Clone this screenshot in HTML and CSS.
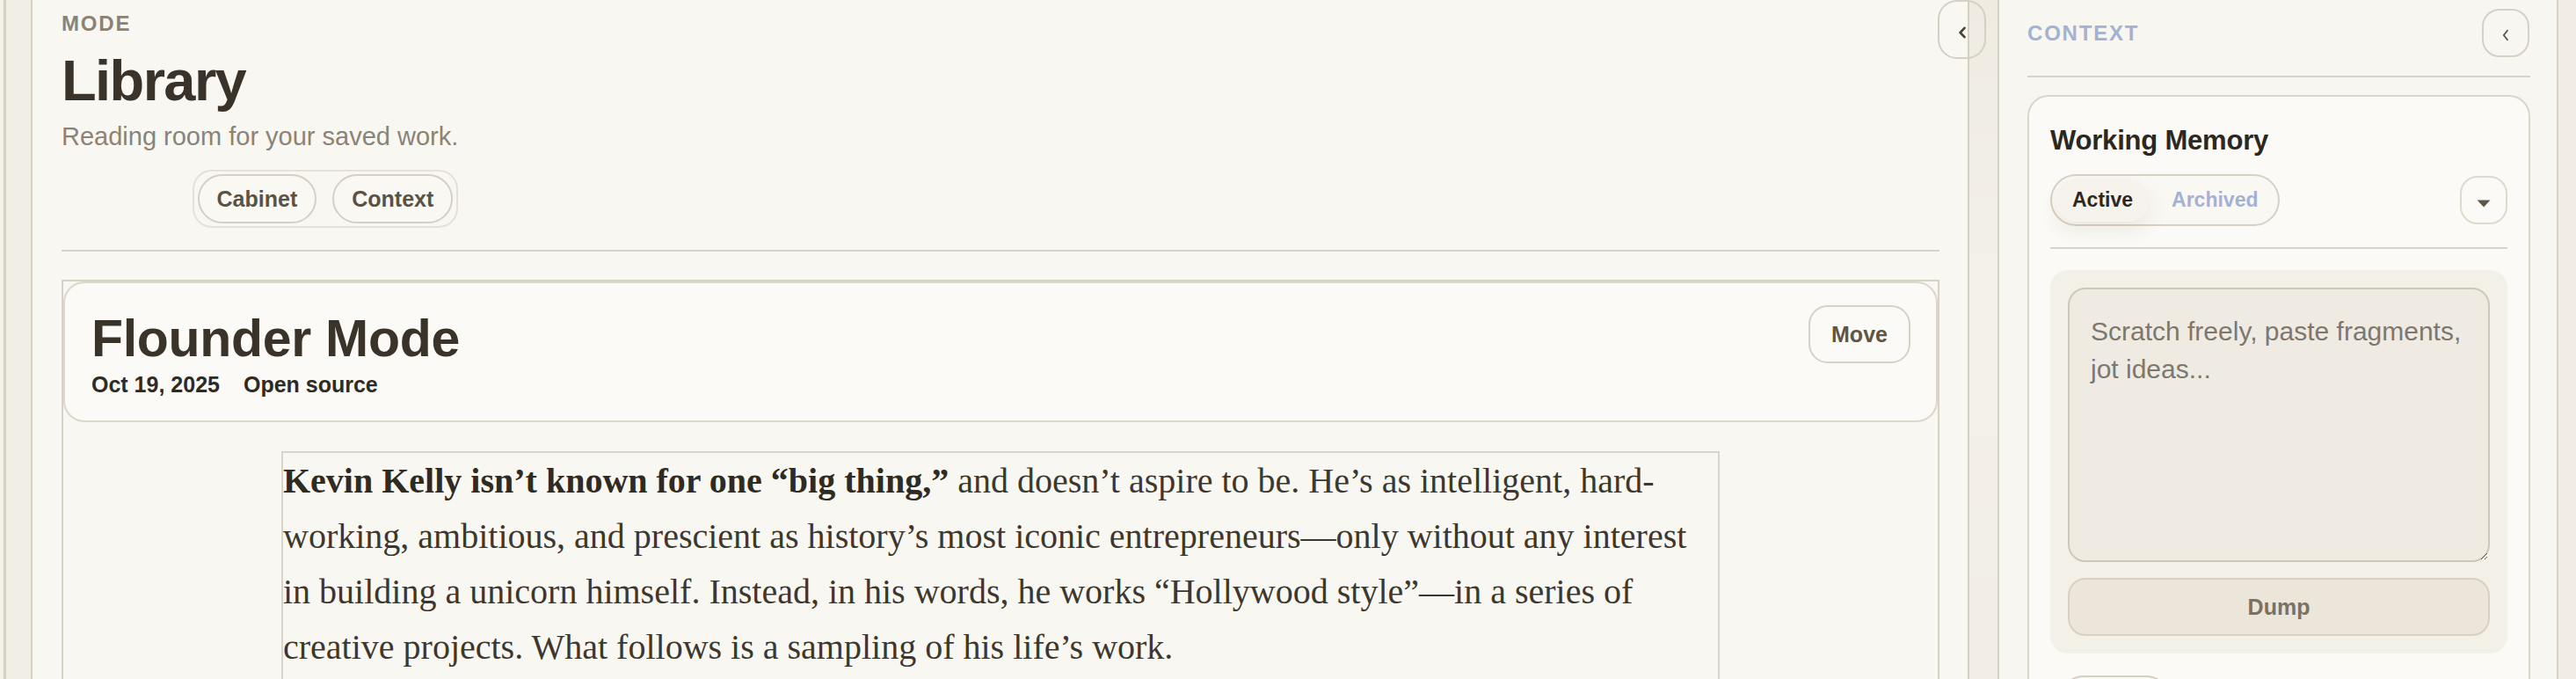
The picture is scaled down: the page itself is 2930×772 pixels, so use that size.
FILE: index.html
```html
<!DOCTYPE html>
<html lang="en">
<head>
<meta charset="utf-8">
<title>Library</title>
<link rel="stylesheet" href="styles.css">
</head>
<body>
<div class="app">
  <div class="rail-left"></div>

  <main class="main">
    <header class="mode-head">
      <div class="eyebrow">MODE</div>
      <h1 class="mode-title">Library</h1>
      <p class="mode-sub">Reading room for your saved work.</p>
      <div class="seg">
        <button class="seg-btn">Cabinet</button>
        <button class="seg-btn">Context</button>
      </div>
    </header>
    <div class="rule"></div>

    <article class="doc">
      <div class="doc-head">
        <div class="doc-head-text">
          <h2 class="doc-title">Flounder Mode</h2>
          <div class="doc-meta"><span>Oct 19, 2025</span><span>Open source</span></div>
        </div>
        <button class="btn-move">Move</button>
      </div>
      <div class="doc-body">
        <p><strong>Kevin Kelly isn’t known for one “big thing,”</strong> and doesn’t aspire to be. He’s as intelligent, hard-working, ambitious, and prescient as history’s most iconic entrepreneurs—only without any interest in building a unicorn himself. Instead, in his words, he works “Hollywood style”—in a series of creative projects. What follows is a sampling of his life’s work.</p>
      </div>
    </article>

    <button class="collapse collapse-main" aria-label="Collapse">
      <svg width="10" height="14" viewBox="0 0 10 14"><path d="M7.5 1.8 L2.6 7 L7.5 12.2" fill="none" stroke="#4a4235" stroke-width="2.6" stroke-linecap="round" stroke-linejoin="round"/></svg>
    </button>
  </main>

  <div class="gutter"></div>

  <aside class="side">
    <div class="side-head">
      <div class="eyebrow eyebrow-blue">CONTEXT</div>
      <button class="collapse collapse-side" aria-label="Collapse context">
        <svg width="8" height="14" viewBox="0 0 8 14"><path d="M6 1.8 L1.8 7 L6 12.2" fill="none" stroke="#5a5245" stroke-width="1.8" stroke-linecap="round" stroke-linejoin="round"/></svg>
      </button>
    </div>
    <div class="side-rule"></div>

    <section class="card">
      <h3 class="card-title">Working Memory</h3>
      <div class="card-row">
        <div class="wm-toggle">
          <button class="wm-tab is-active">Active</button>
          <button class="wm-tab">Archived</button>
        </div>
        <button class="dropdown" aria-label="Options">
          <svg width="16" height="9" viewBox="0 0 16 9"><path d="M0.5 0.5 H15.5 L8 8.5 Z" fill="#5f5647"/></svg>
        </button>
      </div>
      <div class="card-rule"></div>
      <div class="scratch">
        <textarea class="scratch-input" placeholder="Scratch freely, paste fragments, jot ideas..."></textarea>
        <button class="dump">Dump</button>
      </div>
      <div class="card-foot">
        <button class="foot-pill" aria-label="More"></button>
      </div>
    </section>
  </aside>

  <div class="rail-right"></div>
</div>
</body>
</html>
```

FILE: styles.css
```css
* { box-sizing: border-box; }

html, body {
  margin: 0;
  padding: 0;
  width: 2930px;
  height: 772px;
  overflow: hidden;
  background: #f4f1ea;
  font-family: "Liberation Sans", Arial, sans-serif;
  color: #3a3329;
}

button {
  font-family: "Liberation Sans", Arial, sans-serif;
  cursor: pointer;
  margin: 0;
}

.app {
  display: flex;
  height: 772px;
  padding-left: 4px;
  overflow: hidden;
}

/* rails */
.rail-left {
  flex: 0 0 33px;
  border-left: 3px solid #d7d1c5;
  border-right: 2px solid #d7d1c5;
  background: #f1eee6;
}

.rail-right {
  flex: 0 0 22px;
  border-left: 2px solid #d7d1c5;
  background: #f1ede5;
}

.gutter {
  flex: 0 0 36px;
  border-left: 2px solid #d6d0c4;
  border-right: 2px solid #d6d0c4;
  background: linear-gradient(180deg, #efebe2 0%, #f4f1e9 45%, #f2eee6 100%);
}

/* main */
.main {
  position: relative;
  flex: 1 1 auto;
  min-width: 0;
  height: 772px;
  padding: 13px 32px 0 33px;
  background: #f9f7f1;
}

.eyebrow {
  font-size: 24px;
  line-height: 28px;
  font-weight: 700;
  letter-spacing: 1.8px;
  color: #8b8273;
}

.eyebrow-blue {
  color: #a3b1d2;
}

.mode-head {
  display: flex;
  flex-direction: column;
  align-items: flex-start;
  width: fit-content;
}

.mode-title {
  margin: 18px 0 0;
  font-size: 65px;
  line-height: 65px;
  font-weight: 700;
  letter-spacing: -1.6px;
  color: #3a3329;
}

.mode-sub {
  margin: 13px 0 0;
  font-size: 29px;
  line-height: 36px;
  color: #8a8377;
}

.seg {
  align-self: flex-end;
  margin-top: 20px;
  display: flex;
  gap: 18px;
  padding: 3px 4px;
  border: 2px solid #e6e0d6;
  border-radius: 22px;
}

.seg-btn {
  height: 56px;
  padding: 0 20px;
  border: 2px solid #d6cfc3;
  border-radius: 999px;
  background: #faf8f3;
  font-size: 25px;
  font-weight: 700;
  color: #5b5243;
}

.rule {
  height: 2px;
  margin: 25px 0 32px;
  background: #d9d3c7;
}

/* article */
.doc {
  border: 2px solid #d8d2c5;
  border-bottom: none;
  height: 454px;
  overflow: hidden;
}

.doc-head {
  display: flex;
  justify-content: space-between;
  align-items: flex-start;
  padding: 25px 29px 27px 30px;
  border: 2px solid #ddd6ca;
  border-radius: 24px;
  background: #fbfaf6;
}

.doc-title {
  margin: 0;
  font-size: 59px;
  line-height: 76px;
  font-weight: 700;
  letter-spacing: -0.3px;
  color: #3a3329;
}

.doc-meta {
  display: flex;
  gap: 27px;
  font-size: 25px;
  line-height: 28px;
  font-weight: 700;
  color: #2f2a22;
}

.btn-move {
  width: 116px;
  height: 66px;
  border: 2px solid #d8d0c4;
  border-radius: 22px;
  background: #fbfaf6;
  font-size: 25px;
  font-weight: 700;
  color: #5e5545;
}

.doc-body {
  width: 1636px;
  height: 259px;
  margin: 33px auto 0;
  border: 2px solid #d9d4c9;
  border-bottom: none;
}

.doc-body p {
  margin: 0;
  font-family: "Liberation Serif", "Times New Roman", serif;
  font-size: 40px;
  line-height: 63px;
  color: #3d372e;
}

.doc-body strong {
  color: #2f2a22;
}

/* collapse buttons */
.collapse {
  display: flex;
  align-items: center;
  justify-content: center;
  padding: 0;
  border: 2px solid #d6cfc3;
  background: transparent;
}

.collapse-main {
  position: absolute;
  top: 0;
  right: -21px;
  width: 55px;
  height: 67px;
  border-radius: 22px;
  padding-top: 6px;
}

.collapse-side {
  width: 54px;
  height: 55px;
  border-radius: 20px;
  border-color: #d8d0c4;
  padding-top: 5px;
}

/* side panel */
.side {
  flex: 0 0 634px;
  height: 772px;
  padding: 10px 30px 0 32px;
  background: #f8f6f0;
  overflow: hidden;
}

.side-head {
  display: flex;
  justify-content: space-between;
  align-items: center;
  height: 55px;
  padding-right: 1px;
}

.side-rule {
  height: 2px;
  margin-top: 21px;
  background: #d9d2c6;
}

.card {
  margin-top: 20px;
  padding: 32px 24px 0;
  border: 2px solid #dcd5c9;
  border-bottom: none;
  border-radius: 24px 24px 0 0;
  background: #fbfaf6;
  height: 664px;
  overflow: hidden;
}

.card-title {
  margin: 0;
  font-size: 31px;
  line-height: 36px;
  font-weight: 700;
  letter-spacing: -0.2px;
  color: #2c2720;
}

.card-row {
  margin-top: 20px;
  display: flex;
  justify-content: space-between;
  align-items: center;
}

.wm-toggle {
  display: flex;
  gap: 6px;
  padding: 3px 4px;
  border: 2px solid #d8d0c3;
  border-radius: 999px;
  background: #faf8f3;
}

.wm-tab {
  height: 49px;
  padding: 0 19px;
  border: none;
  border-radius: 999px;
  background: transparent;
  font-size: 23px;
  font-weight: 700;
  color: #a3b1d2;
}

.wm-tab.is-active {
  background: #f6f3ec;
  color: #2d281f;
  box-shadow: 0 12px 22px rgba(90, 70, 40, 0.08);
}

.dropdown {
  display: flex;
  align-items: center;
  justify-content: center;
  width: 54px;
  height: 55px;
  padding: 7px 0 0;
  border: 2px solid #e0d9ce;
  border-radius: 20px;
  background: #fbfaf6;
}

.card-rule {
  height: 2px;
  margin-top: 24px;
  background: #d9d3c7;
}

.scratch {
  margin-top: 24px;
  display: flex;
  flex-direction: column;
  gap: 18px;
  padding: 20px;
  border-radius: 20px;
  background: #f3f0e8;
}

.scratch-input {
  display: block;
  width: 100%;
  height: 312px;
  padding: 26px 24px;
  border: 2px solid #cfc7b9;
  border-radius: 20px;
  background: #efebe2;
  font-family: "Liberation Sans", Arial, sans-serif;
  font-size: 30px;
  line-height: 43px;
  color: #3a3329;
  resize: vertical;
  outline: none;
}

.scratch-input::placeholder {
  color: #7d786f;
}

.dump {
  height: 66px;
  border: 2px solid #d9d0c2;
  border-radius: 20px;
  background: #ebe5da;
  font-size: 25px;
  font-weight: 700;
  color: #7a7163;
}

.card-foot {
  margin-top: 25px;
  padding-left: 10px;
}

.foot-pill {
  display: block;
  width: 127px;
  height: 56px;
  border: 2px solid #d6cfc3;
  border-radius: 999px;
  background: #faf8f3;
}
```
